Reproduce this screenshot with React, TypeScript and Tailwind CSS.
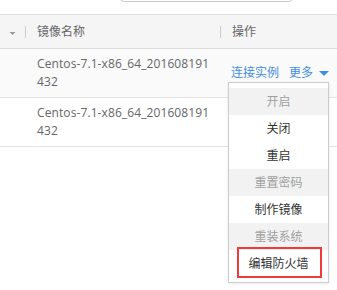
import React from "react";

const FONT = { fontFamily: '"Open Sans", "Noto Sans CJK SC", sans-serif' };

/* dropdown menu entries: disabled ones get a grey band */
const menu = [
  { label: "开启", disabled: true },
  { label: "关闭", disabled: false },
  { label: "重启", disabled: false },
  { label: "重置密码", disabled: true },
  { label: "制作镜像", disabled: false },
  { label: "重装系统", disabled: true },
  { label: "编辑防火墙", disabled: false, marked: true },
];

function Caret({ className }: { className?: string }) {
  return (
    <svg viewBox="0 0 10 5" className={className} fill="currentColor">
      <path d="M0 0h10L5 5z" />
    </svg>
  );
}

function MoreMenu() {
  return (
    <div className="absolute left-[8px] top-[33px] z-10 w-[101px] border border-[#cccccc] bg-white py-[5px] shadow-[0_1px_3px_rgba(0,0,0,0.08)]">
      {menu.map((m) => (
        <div
          key={m.label}
          className={`relative flex h-[27px] items-center justify-center text-[12px] ${
            m.disabled ? "bg-[#f2f2f2] text-[#a0a0a0]" : "text-[#333333]"
          }`}
        >
          {m.label}
          {m.marked && (
            <div className="absolute left-[8px] right-[6px] top-[-3px] bottom-[-1px] border-2 border-[#f03a3a]" />
          )}
        </div>
      ))}
    </div>
  );
}

function Row({ shaded, withMenu }: { shaded?: boolean; withMenu?: boolean }) {
  return (
    <div className={`grid h-[49px] grid-cols-[25px_195px_1fr] border-b border-[#e4e4e4] ${shaded ? "bg-[#fafafa]" : "bg-white"}`}>
      <div />
      <div className="flex items-center pl-[12px]">
        <div className="w-[176px] break-all text-[12px] leading-[18px] tracking-[0.1px] text-[#666666]">
          Centos-7.1-x86_64_201608191432
        </div>
      </div>
      <div className="relative flex items-center pl-[11px] text-[12px] text-[#3d8de3]">
        {withMenu && (
          <>
            <span>连接实例</span>
            <span className="ml-[10px]">更多</span>
            <Caret className="ml-[6px] h-[5px] w-[10px]" />
            <MoreMenu />
          </>
        )}
      </div>
    </div>
  );
}

export default function App() {
  return (
    <div className="h-[290px] w-[337px] overflow-hidden bg-white" style={FONT}>
      {/* search box, mostly scrolled out of view */}
      <div className="flex h-[14px] items-start overflow-hidden pl-[120px]">
        <div className="-mt-[28px] h-[30px] w-[173px] shrink-0 rounded-[4px] border border-[#cccccc] bg-white" />
      </div>

      {/* table header */}
      <div className="grid h-[35px] grid-cols-[25px_195px_1fr] border-y border-[#dddddd] bg-[#f5f5f5] text-[12px] text-[#666666]">
        <div className="flex items-center justify-end pr-[9px] pt-[3px]">
          <Caret className="h-[3px] w-[7px] text-[#999999]" />
        </div>
        <div className="flex items-center">
          <span className="h-[12px] w-px bg-[#cccccc]" />
          <span className="ml-[11px]">镜像名称</span>
        </div>
        <div className="flex items-center">
          <span className="h-[12px] w-px bg-[#cccccc]" />
          <span className="ml-[11px]">操作</span>
        </div>
      </div>

      <Row shaded withMenu />
      <Row />
    </div>
  );
}
